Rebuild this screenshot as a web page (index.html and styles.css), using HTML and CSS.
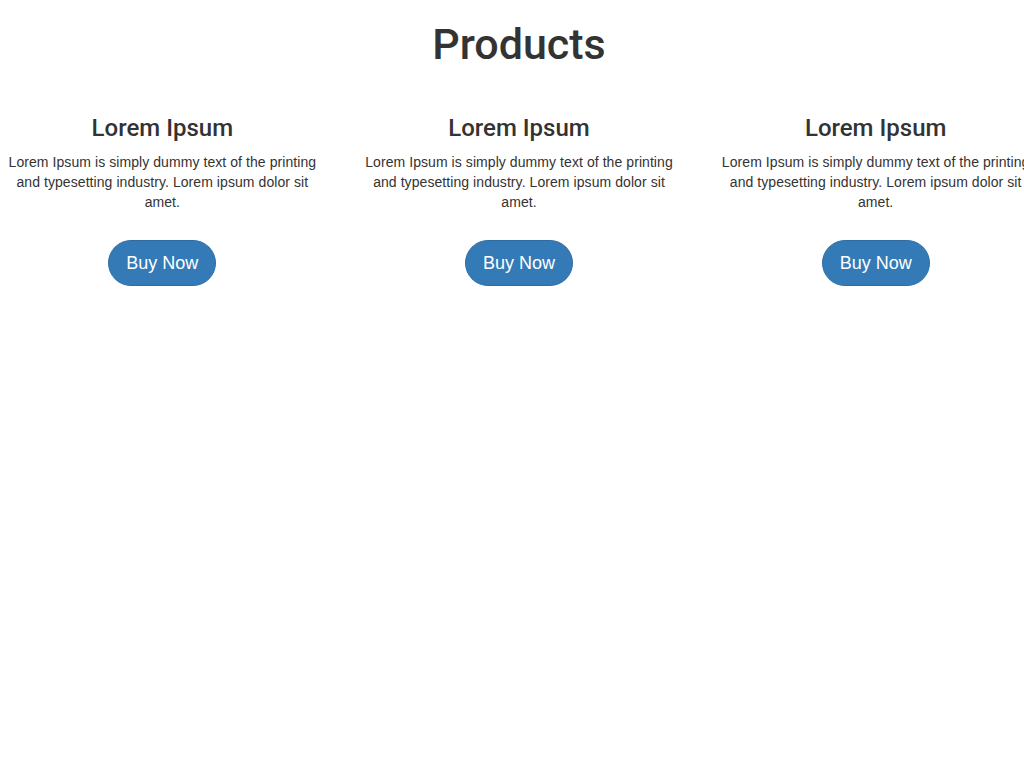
FILE: index.html
```html
<!DOCTYPE html>
<html lang="en">
<head>
<meta charset="utf-8">
<title>Products</title>
<link rel="stylesheet" href="styles.css">
</head>
<body>
<div class="page">
  <h1 class="title">Products</h1>
  <div class="row">
    <div class="product">
      <h3 class="product-name">Lorem Ipsum</h3>
      <p class="product-desc">Lorem Ipsum is simply dummy text of the printing and typesetting industry. Lorem ipsum dolor sit amet.</p>
      <a class="btn-buy" href="#">Buy Now</a>
    </div>
    <div class="product">
      <h3 class="product-name">Lorem Ipsum</h3>
      <p class="product-desc">Lorem Ipsum is simply dummy text of the printing and typesetting industry. Lorem ipsum dolor sit amet.</p>
      <a class="btn-buy" href="#">Buy Now</a>
    </div>
    <div class="product">
      <h3 class="product-name">Lorem Ipsum</h3>
      <p class="product-desc">Lorem Ipsum is simply dummy text of the printing and typesetting industry. Lorem ipsum dolor sit amet.</p>
      <a class="btn-buy" href="#">Buy Now</a>
    </div>
  </div>
</div>
</body>
</html>
```

FILE: styles.css
```css
html, body {
  margin: 0;
  padding: 0;
  overflow: hidden;
  background: #fff;
}

body {
  font-family: "Liberation Sans", Arial, Helvetica, sans-serif;
  font-size: 14px;
  line-height: 20px;
  color: #333;
  width: 1024px;
  height: 768px;
}

.page {
  width: 1070px;
  margin-left: -16px;
  display: flex;
  flex-direction: column;
}

.title {
  margin: 18px 0 0;
  font-family: Roboto, "Liberation Sans", sans-serif;
  font-size: 43px;
  line-height: 52px;
  font-weight: 500;
  text-align: center;
  color: #333;
}

.row {
  display: grid;
  grid-template-columns: repeat(3, 1fr);
  margin-top: 43px;
}

.product {
  padding: 0 15px;
  display: flex;
  flex-direction: column;
  align-items: center;
  text-align: center;
}

.product-name {
  margin: 0;
  font-family: Roboto, "Liberation Sans", sans-serif;
  font-size: 24px;
  line-height: 30px;
  font-weight: 500;
}

.product-desc {
  margin: 9px 0 0;
  font-size: 14px;
  line-height: 20px;
  letter-spacing: 0.07px;
}

.btn-buy {
  margin-top: 28px;
  padding: 10px 17px;
  font-size: 18px;
  line-height: 24px;
  color: #fff;
  background: #337ab7;
  border: 1px solid #2e6da4;
  border-radius: 23px;
  text-decoration: none;
}
```
